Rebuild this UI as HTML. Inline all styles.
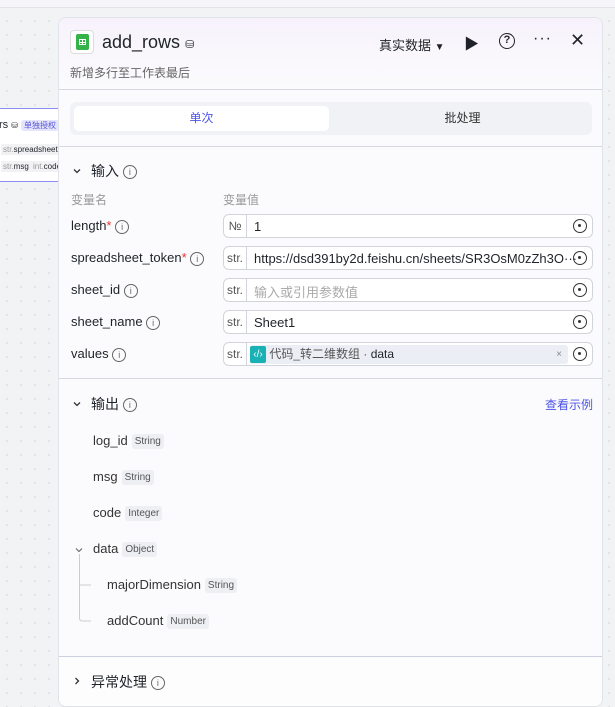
<!DOCTYPE html>
<html><head><meta charset="utf-8"><style>
*{box-sizing:border-box;margin:0;padding:0}
body{width:615px;height:700px;overflow:hidden;background:#f2f3f5;background-image:radial-gradient(#dcdde2 1px,transparent 1px);background-size:14px 14px;font-family:"Liberation Sans","Noto Sans CJK SC",sans-serif;position:relative;color:#1f2329}
.top{position:absolute;left:0;top:0;width:615px;height:8px;background:#f6f6f8;border-bottom:1px solid #e3e4e8}
.node{position:absolute;left:-10px;top:108px;width:90px;height:74px;background:#fff;border:1px solid #8c8cf5;border-radius:6px;white-space:nowrap}
.panel{position:absolute;left:58px;top:17px;width:545px;height:690px;background:#fbfbfd;border:1px solid #e2e3ea;border-radius:8px;overflow:hidden}
.head{height:72px;background:linear-gradient(#f7f2fc,#fbfbfd);border-bottom:1px solid #d6d8e4;position:relative}
.abs{position:absolute}
.ic{width:14px;height:14px;border:1.2px solid #666;border-radius:50%;display:inline-block;font-size:9px;text-align:center;line-height:12px;color:#666;vertical-align:middle;font-style:normal}
.lbl{position:absolute;left:12px;font-size:13px;color:#1f2329}
.inp{position:absolute;left:164px;width:370px;height:24px;border:1px solid #d2d4dc;border-radius:6px;background:#fff;font-size:13px}
.inp .t{position:absolute;left:0;top:0;width:23px;height:22px;border-right:1px solid #d2d4dc;color:#555;font-size:12px;text-align:center;line-height:22px}
.inp .v{position:absolute;left:30px;top:4px;white-space:nowrap}
.inp .tg{position:absolute;right:5px;top:4px;width:14px;height:14px;border:1.5px solid #333;border-radius:50%}
.inp .tg:after{content:"";position:absolute;left:4px;top:4px;width:3px;height:3px;background:#333;border-radius:50%}
.o{position:absolute;font-size:13px;color:#333}
.o span{font-size:10px;background:#eeeff3;color:#555;border-radius:3px;padding:2px 3px;margin-left:4px;vertical-align:1px}
.sep{position:absolute;left:0;width:545px;height:1px;background:#d6d8e4}
svg.ch{position:absolute}
</style></head><body>
<div class="top"></div>
<div class="node">
<div style="position:absolute;left:8px;top:10px;font-size:11px">rs <span style="font-size:8px">⛁</span> <span style="font-size:8px;background:#e4e4fc;color:#5656d6;padding:1px 3px;border-radius:3px">单独授权</span></div>
<div style="position:absolute;left:10px;top:35px;font-size:8px;background:#f2f2f5;padding:1px 2px"><span style="color:#999">str.</span>spreadsheet</div>
<div style="position:absolute;left:10px;top:52px;font-size:8px;background:#f2f2f5;padding:1px 2px"><span style="color:#999">str.</span>msg</div>
<div style="position:absolute;left:40px;top:52px;font-size:8px;background:#f2f2f5;padding:1px 2px"><span style="color:#999">int.</span>code</div>
</div>
<div class="panel">
<div class="head">
<div class="abs" style="left:11px;top:12px;width:24px;height:24px;border:1px solid #ddd;border-radius:4px;background:#fff"><div style="position:absolute;left:5px;top:3px;width:13px;height:16px;background:#34b34a;border-radius:2px"><div style="position:absolute;left:3px;top:5px;width:7px;height:6px;border:1px solid #fff;background:linear-gradient(#fff,#fff) 2px 0/1px 6px no-repeat,linear-gradient(#fff,#fff) 0 2px/7px 1px no-repeat"></div></div></div>
<div class="abs" style="left:43px;top:14px;font-size:18px;color:#1f2329">add_rows <span style="font-size:11px">⛁</span></div>
<div class="abs" style="left:320px;top:17px;font-size:13px">真实数据 <span style="font-size:10px">▼</span></div>
<div class="abs" style="left:405px;top:15px;font-size:15px">▶</div>
<div class="abs" style="left:440px;top:15px;width:16px;height:16px;border:1.5px solid #222;border-radius:50%;font-size:11px;text-align:center;line-height:13px;font-weight:bold">?</div>
<div class="abs" style="left:474px;top:12px;font-size:16px;letter-spacing:1px">···</div>
<div class="abs" style="left:511px;top:12px;font-size:18px">✕</div>
<div class="abs" style="left:11px;top:46px;font-size:12px;color:#666">新增多行至工作表最后</div>
</div>
<div class="abs" style="left:11px;top:84px;width:522px;height:33px;background:#f1f2f6;border-radius:6px">
<div class="abs" style="left:4px;top:4px;width:255px;height:25px;background:#fff;border-radius:5px;text-align:center;line-height:25px;font-size:12px;color:#4d53e8">单次</div>
<div class="abs" style="left:265px;top:4px;width:255px;height:25px;text-align:center;line-height:25px;font-size:12px;color:#333">批处理</div>
</div>
<div class="sep" style="top:128px"></div>
<svg class="ch" style="left:13px;top:148px" width="10" height="10" viewBox="0 0 10 10"><path d="M2 3.5 L5 6.5 L8 3.5" fill="none" stroke="#333" stroke-width="1.3"/></svg>
<div class="abs" style="left:32px;top:143px;font-size:14px">输入 <i class="ic">i</i></div>
<div class="abs" style="left:12px;top:173px;font-size:12px;color:#999">变量名</div>
<div class="abs" style="left:164px;top:173px;font-size:12px;color:#999">变量值</div>
<div class="lbl" style="top:200px">length<span style="color:#e33">*</span> <i class="ic">i</i></div>
<div class="lbl" style="top:232px">spreadsheet_token<span style="color:#e33">*</span> <i class="ic">i</i></div>
<div class="lbl" style="top:264px">sheet_id <i class="ic">i</i></div>
<div class="lbl" style="top:296px">sheet_name <i class="ic">i</i></div>
<div class="lbl" style="top:328px">values <i class="ic">i</i></div>
<div class="inp" style="top:196px"><div class="t">№</div><div class="v">1</div><div class="tg"></div></div>
<div class="inp" style="top:228px"><div class="t">str.</div><div class="v">https://dsd391by2d.feishu.cn/sheets/SR3OsM0zZh3O···</div><div class="tg"></div></div>
<div class="inp" style="top:260px"><div class="t">str.</div><div class="v" style="color:#aaa;top:3px">输入或引用参数值</div><div class="tg"></div></div>
<div class="inp" style="top:292px"><div class="t">str.</div><div class="v">Sheet1</div><div class="tg"></div></div>
<div class="inp" style="top:324px"><div class="t">str.</div>
<div class="abs" style="left:26px;top:2px;width:318px;height:19px;background:#eceef5;border-radius:3px;font-size:12px;line-height:19px"><span style="display:inline-block;width:16px;height:17px;background:#1ab1b5;color:#fff;font-size:10px;text-align:center;line-height:17px;vertical-align:top;margin-top:1px;border-radius:2px">‹/›</span> <span style="color:#555">代码_转二维数组 ·</span> data<span style="position:absolute;right:6px;color:#888;font-size:10px">×</span></div>
<div class="tg"></div></div>
<div class="sep" style="top:360px"></div>
<svg class="ch" style="left:13px;top:381px" width="10" height="10" viewBox="0 0 10 10"><path d="M2 3.5 L5 6.5 L8 3.5" fill="none" stroke="#333" stroke-width="1.3"/></svg>
<div class="abs" style="left:32px;top:376px;font-size:14px">输出 <i class="ic">i</i></div>
<div class="abs" style="left:486px;top:378px;font-size:12px;color:#4d53e8">查看示例</div>
<div class="o" style="left:34px;top:415px">log_id<span>String</span></div>
<div class="o" style="left:34px;top:451px">msg<span>String</span></div>
<div class="o" style="left:34px;top:487px">code<span>Integer</span></div>
<svg class="ch" style="left:15px;top:527px" width="10" height="10" viewBox="0 0 10 10"><path d="M2 3.5 L5 6.5 L8 3.5" fill="none" stroke="#666" stroke-width="1.1"/></svg>
<div class="o" style="left:34px;top:523px">data<span>Object</span></div>
<svg class="ch" style="left:19px;top:536px" width="14" height="70"><path d="M1.5 0 V64 Q1.5 67 4.5 67 H13 M1.5 31 H13" fill="none" stroke="#ccc" stroke-width="1"/></svg>
<div class="o" style="left:48px;top:559px">majorDimension<span>String</span></div>
<div class="o" style="left:48px;top:595px">addCount<span>Number</span></div>
<div class="sep" style="top:638px;background:#ccd0e0"></div>
<div class="abs" style="left:0;top:639px;width:545px;height:70px;background:#fdfdfe"></div>
<svg class="ch" style="left:13px;top:658px" width="10" height="10" viewBox="0 0 10 10"><path d="M3.5 2 L6.5 5 L3.5 8" fill="none" stroke="#333" stroke-width="1.3"/></svg>
<div class="abs" style="left:32px;top:654px;font-size:14px">异常处理 <i class="ic">i</i></div>
</div>
</body></html>
